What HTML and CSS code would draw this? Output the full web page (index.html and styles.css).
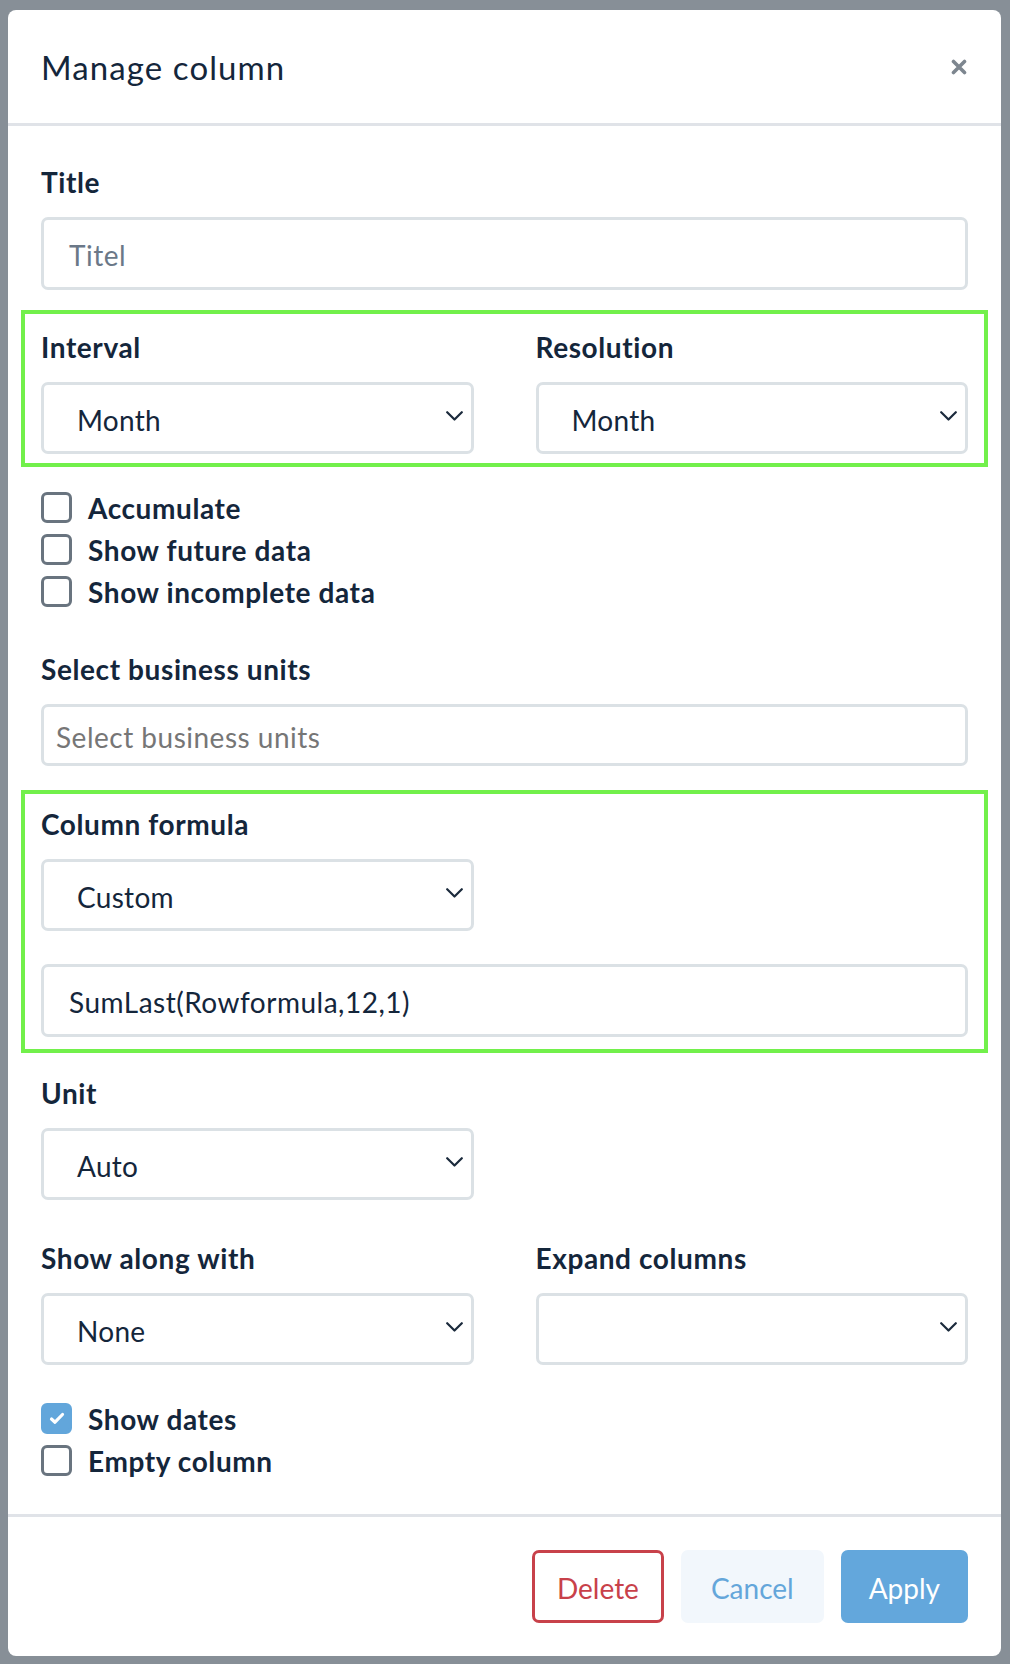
FILE: index.html
```html
<!DOCTYPE html>
<html lang="en">
<head>
    <meta charset="UTF-8">
    <meta name="viewport" content="width=device-width, initial-scale=1.0">
    <title>Manage column</title>
    <link rel="stylesheet" href="styles.css">
</head>
<body>
    <div class="modal">
        <div class="modal__header">
            <h2 class="modal__title">Manage column</h2>
            <button class="modal__close" aria-label="Close">
                <svg width="16" height="16" viewBox="0 0 16 16">
                    <path d="M2.5 2.5 L13.5 13.5 M13.5 2.5 L2.5 13.5" stroke="#7d868f" stroke-width="3.6" stroke-linecap="round" fill="none"/>
                </svg>
            </button>
        </div>

        <div class="modal__body">
            <label class="field-label">Title</label>
            <div class="input input--title placeholder">Titel</div>

            <div class="highlight highlight--interval">
                <div class="row">
                    <div class="col">
                        <label class="field-label">Interval</label>
                        <div class="select">
                            <span>Month</span>
                            <svg class="chevron" width="17" height="10" viewBox="0 0 17 10"><polyline points="1.2,1.2 8.5,8.5 15.8,1.2" /></svg>
                        </div>
                    </div>
                    <div class="col">
                        <label class="field-label">Resolution</label>
                        <div class="select">
                            <span>Month</span>
                            <svg class="chevron" width="17" height="10" viewBox="0 0 17 10"><polyline points="1.2,1.2 8.5,8.5 15.8,1.2" /></svg>
                        </div>
                    </div>
                </div>
            </div>

            <div class="checks checks--top">
                <div class="check"><span class="check__box"></span>Accumulate</div>
                <div class="check"><span class="check__box"></span>Show future data</div>
                <div class="check"><span class="check__box"></span>Show incomplete data</div>
            </div>

            <label class="field-label field-label--units">Select business units</label>
            <div class="input input--units placeholder-grey">Select business units</div>

            <div class="highlight highlight--formula">
                <label class="field-label">Column formula</label>
                <div class="select select--half">
                    <span>Custom</span>
                    <svg class="chevron" width="17" height="10" viewBox="0 0 17 10"><polyline points="1.2,1.2 8.5,8.5 15.8,1.2" /></svg>
                </div>
                <div class="input input--formula">SumLast(Rowformula,12,1)</div>
            </div>

            <label class="field-label field-label--unit">Unit</label>
            <div class="select select--half">
                <span>Auto</span>
                <svg class="chevron" width="17" height="10" viewBox="0 0 17 10"><polyline points="1.2,1.2 8.5,8.5 15.8,1.2" /></svg>
            </div>

            <div class="row row--along">
                <div class="col">
                    <label class="field-label">Show along with</label>
                    <div class="select">
                        <span>None</span>
                        <svg class="chevron" width="17" height="10" viewBox="0 0 17 10"><polyline points="1.2,1.2 8.5,8.5 15.8,1.2" /></svg>
                    </div>
                </div>
                <div class="col">
                    <label class="field-label">Expand columns</label>
                    <div class="select">
                        <span></span>
                        <svg class="chevron" width="17" height="10" viewBox="0 0 17 10"><polyline points="1.2,1.2 8.5,8.5 15.8,1.2" /></svg>
                    </div>
                </div>
            </div>

            <div class="checks checks--bottom">
                <div class="check">
                    <span class="check__box check__box--on">
                        <svg width="16" height="13" viewBox="0 0 16 13"><polyline points="2.5,7 6,10.2 13.5,2.5" /></svg>
                    </span>Show dates
                </div>
                <div class="check"><span class="check__box"></span>Empty column</div>
            </div>
        </div>

        <div class="modal__footer">
            <button class="btn btn--delete">Delete</button>
            <button class="btn btn--cancel">Cancel</button>
            <button class="btn btn--apply">Apply</button>
        </div>
    </div>
</body>
</html>
```

FILE: styles.css
```css
* {
    margin: 0;
    padding: 0;
    box-sizing: border-box;
}

body {
    background: #878f97;
    font-family: Lato, "Open Sans", sans-serif;
    color: #14263b;
    padding: 10px 9px 8px 8px;
}

.modal {
    background: #fff;
    border-radius: 8px;
    width: 993px;
    overflow: hidden;
}

.modal__header {
    height: 116px;
    padding: 0 33px;
    display: flex;
    align-items: center;
    justify-content: space-between;
    border-bottom: 3px solid #e0e3e8;
}

.modal__title {
    font-size: 33px;
    font-weight: 400;
    line-height: 1;
    letter-spacing: 1.1px;
    padding-top: 2px;
}

.modal__close {
    border: none;
    background: none;
    width: 18px;
    height: 18px;
    display: flex;
    align-items: center;
    justify-content: center;
}

.modal__body {
    padding: 40px 33px 38px;
    border-bottom: 3px solid #e0e3e8;
}

.field-label {
    display: block;
    font-size: 28px;
    font-weight: 700;
    line-height: 32px;
    letter-spacing: 0.6px;
    margin-bottom: 19px;
}

.input {
    height: 73px;
    border: 3px solid #dbe1e5;
    border-radius: 7px;
    display: flex;
    align-items: center;
    font-size: 28px;
    letter-spacing: 0.5px;
    padding-left: 25px;
    padding-top: 3px;
}

.placeholder { color: #6b7888; }
.placeholder-grey { color: #767676; }

.input--units {
    height: 62px;
    padding-left: 12px;
}

.input--formula {
    margin-top: 33px;
}

/* green boxes marking the changed fields */
.highlight {
    border: 4px solid #72f04b;
    margin: 0 -20px;
    padding: 17px 16px 9px;
}

.highlight--interval { margin-top: 20px; }

.highlight--formula {
    margin-top: 24px;
    padding: 14px 16px 12px;
}

.row {
    display: flex;
    gap: 62px;
}

.col { flex: 1; }

.row--along { margin-top: 42px; }

.select {
    height: 72px;
    border: 3px solid #dbe1e5;
    border-radius: 7px;
    display: flex;
    align-items: center;
    justify-content: space-between;
    padding: 4px 8px 0 33px;
    font-size: 28px;
    letter-spacing: 0.3px;
}

.select--half { width: 433px; }

.chevron {
    margin-top: -8px;
}

.chevron polyline {
    fill: none;
    stroke: #1b2a3c;
    stroke-width: 2.2;
    stroke-linecap: round;
    stroke-linejoin: round;
}

.field-label--units { margin-top: 46px; }
.field-label--unit { margin-top: 24px; }

.checks {
    display: flex;
    flex-direction: column;
    gap: 11px;
}

.checks--top { margin-top: 25px; }
.checks--bottom { margin-top: 38px; }

.check {
    display: flex;
    align-items: center;
    height: 31px;
    font-size: 28px;
    font-weight: 700;
    letter-spacing: 0.6px;
}

.check__box {
    width: 31px;
    height: 31px;
    border: 3px solid #69747f;
    border-radius: 6px;
    margin-right: 16px;
    display: flex;
    align-items: center;
    justify-content: center;
}

.check__box--on {
    background: #62a6db;
    border-color: #62a6db;
}

.check__box--on polyline {
    fill: none;
    stroke: #fff;
    stroke-width: 3.2;
    stroke-linecap: round;
    stroke-linejoin: round;
}

.modal__footer {
    display: flex;
    justify-content: flex-end;
    gap: 17px;
    padding: 33px;
}

.btn {
    height: 73px;
    border-radius: 7px;
    border: none;
    font-family: Lato, "Open Sans", sans-serif;
    font-size: 28px;
    padding: 3px 28px 0;
    cursor: pointer;
}

.btn--delete {
    background: #fff;
    color: #c8414a;
    border: 3px solid #c8414a;
    padding: 3px 22px 0;
}

.btn--cancel {
    background: #f2f7fc;
    color: #64a6da;
    padding: 3px 30px 0;
}

.btn--apply {
    background: #63a7dc;
    color: #fff;
}
```
